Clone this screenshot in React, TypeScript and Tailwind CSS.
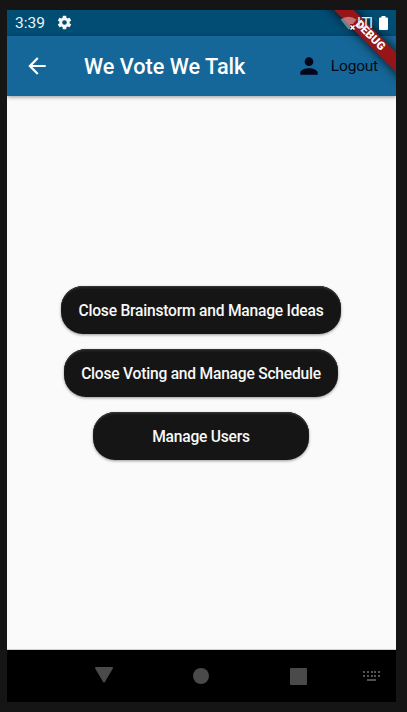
const keyRow = [0, 1, 2, 3, 4];

function StatusBar() {
  return (
    <div className="flex h-[26px] items-center bg-[#024d74] pl-2 pr-[8px] text-[#eef5f9]">
      <span className="w-[30px] text-[15.500px] leading-[26px]">3:39</span>
      <svg className="ml-[11px] mb-px" width="17" height="17" viewBox="0 0 24 24" fill="#f4f9fb">
        <path d="M19.14 12.94c.04-.3.06-.61.06-.94s-.02-.64-.07-.94l2.03-1.58a.49.49 0 0 0 .12-.61l-1.92-3.32a.49.49 0 0 0-.59-.22l-2.39.96a7 7 0 0 0-1.62-.94l-.36-2.54A.48.48 0 0 0 13.92 2.400h-3.840a.47.47 0 0 0-.47.41l-.36 2.540a7.300 7.300 0 0 0-1.620.94l-2.390-.96a.47.47 0 0 0-.59.22L2.740 8.870a.47.47 0 0 0 .12.61l2.030 1.580a6 6 0 0 0 0 1.880l-2.030 1.580a.49.49 0 0 0-.12.61l1.920 3.320c.12.22.37.29.59.22l2.390-.96c.5.38 1.030.7 1.620.94l.36 2.540c.05.24.24.41.48.41h3.840c.24 0 .44-.17.47-.41l.36-2.540a7 7 0 0 0 1.620-.94l2.390.96c.22.08.47 0 .59-.22l1.920-3.320a.47.47 0 0 0-.12-.61zM12 15.300a3.300 3.300 0 1 1 0-6.600 3.300 3.300 0 0 1 0 6.600z" />
      </svg>
      <div className="relative z-30 ml-auto flex items-center">
        <svg width="17" height="17" viewBox="0 0 17 17">
          <path d="M0.500 4.500Q8.500-1 16.500 4.500L13 9H10v5L8.500 14.500z" fill="#ffffff" opacity="0.4" />
          <path d="M10.500 10.500l4 4m0-4l-4 4" stroke="#fff" strokeWidth="1.600" />
        </svg>
        <span className="w-[22px] whitespace-nowrap text-[15px] leading-4 tracking-[-1.500px] text-[#dce6eb]">LTI</span>
        <svg className="mb-px" width="9" height="14" viewBox="0 0 9 14">
          <path d="M2.500 0h4v1.500H8q1 0 1 1V13q0 1-1 1H1q-1 0-1-1V2.500q0-1 1-1h1.500z" fill="#fff" />
        </svg>
      </div>
    </div>
  );
}

function AppBar() {
  return (
    <header className="z-10 flex h-[60px] items-center bg-[#156799] pl-[17px] pr-[18px] shadow-[0_1px_4px_rgba(0,0,0,0.4)]">
      <svg width="26" height="26" viewBox="0 0 24 24" fill="#fff">
        <path d="M20 11H7.830l5.590-5.590L12 4l-8 8 8 8 1.410-1.410L7.830 13H20z" />
      </svg>
      <h1 className="ml-[34px] w-[162px] whitespace-nowrap pt-[2px] text-[21.700px] font-medium leading-7 text-white">We Vote We Talk</h1>
      <button className="ml-auto flex items-center text-[#050914]">
        <svg width="26" height="26" viewBox="0 0 24 24" fill="#03051a">
          <path d="M12 12c2.210 0 4-1.790 4-4s-1.790-4-4-4-4 1.790-4 4 1.790 4 4 4zm0 2c-2.670 0-8 1.340-8 4v2h16v-2c0-2.660-5.330-4-8-4z" />
        </svg>
        <span className="ml-[9px] text-[15.500px] leading-5 tracking-[-0.200px]">Logout</span>
      </button>
    </header>
  );
}

function Pill({ label, width }: { label: string; width: string }) {
  return (
    <button className={`${width} h-12 whitespace-nowrap rounded-[22px] bg-[#151515] pt-[3px] text-[15.600px] font-medium tracking-[-0.220px] text-[#f8f8f8] shadow-[0_1px_3px_rgba(0,0,0,0.4),inset_0_1px_1px_#35393b,inset_0_3px_1px_#1c1d1d]`}>
      {label}
    </button>
  );
}

function NavBar() {
  return (
    <nav className="grid h-[52px] grid-cols-[97px_97px_97px_1fr] items-center bg-black pl-[48px] text-[#4a4a4a]">
      <svg className="ml-[39px] mb-[2px]" width="20" height="18" viewBox="0 0 20 18">
        <path d="M2 2h16L10 15.500z" fill="currentColor" stroke="currentColor" strokeWidth="2" strokeLinejoin="round" />
      </svg>
      <div className="ml-[41px] size-4 rounded-full bg-[#4a4a4a]" />
      <div className="ml-[41px] size-[17px] rounded-[1px] bg-[#4a4a4a]" />
      <div className="ml-[17px] flex w-[17px] flex-col gap-[2px]">
        <div className="flex justify-between">{keyRow.map((k) => <i key={k} className="size-[2px] bg-[#555]" />)}</div>
        <div className="flex justify-between">{keyRow.map((k) => <i key={k} className="size-[2px] bg-[#555]" />)}</div>
        <div className="mx-auto h-[2px] w-[9px] bg-[#505050]" />
      </div>
    </nav>
  );
}

export default function App() {
  return (
    <div className="h-[712px] w-[407px] bg-[#151515] pl-[7px] pt-[10px] font-['Roboto',sans-serif]">
      <div className="relative flex h-[692px] w-[389px] flex-col overflow-hidden bg-[#fafafa]">
        <StatusBar />
        <AppBar />
        <main className="flex flex-1 flex-col items-center gap-[15px] border-b border-[#d0d0d0] pr-px pt-[190px]">
          <Pill label="Close Brainstorm and Manage Ideas" width="w-[280px]" />
          <Pill label="Close Voting and Manage Schedule" width="w-[274px]" />
          <Pill label="Manage Users" width="w-[216px]" />
        </main>
        <NavBar />
        <div className="absolute left-[303px] top-[19px] z-20 h-[13.500px] w-[120px] rotate-45 bg-[#971418] text-center text-[11.500px] font-black leading-[13.500px] text-white shadow-[0_0_8px_2px_rgba(0,0,0,0.6)]">
          DEBUG
        </div>
      </div>
    </div>
  );
}
